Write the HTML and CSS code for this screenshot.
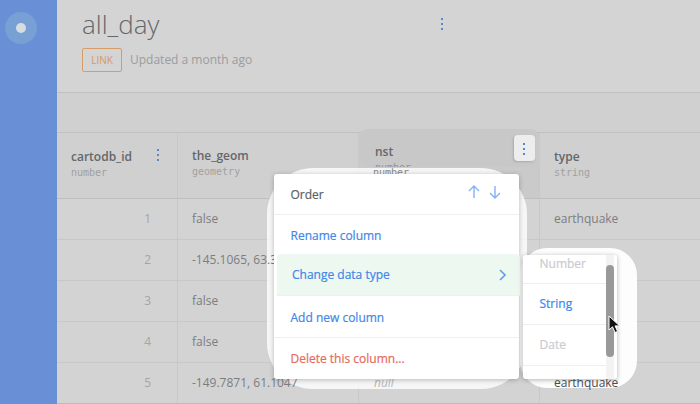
FILE: index.html
```html
<!DOCTYPE html>
<html lang="en">
<head>
<meta charset="utf-8">
<title>all_day</title>
<link rel="stylesheet" href="styles.css">
</head>
<body>
<div class="app">
  <aside class="sidebar"><div class="logo"><span></span></div></aside>
  <main class="main">
    <header class="header">
      <div class="title-row"><h1>all_day</h1><i class="dots"></i></div>
      <div class="meta"><span class="tag">LINK</span><span class="updated">Updated a month ago</span></div>
    </header>
    <div class="strip"></div>
    <section class="table">
      <div class="row head">
        <div class="cell"><div><b>cartodb_id</b><small>number</small></div><i class="dots id-dots"></i></div>
        <div class="cell geom"><div><b>the_geom</b><small>geometry</small></div></div>
        <div class="cell active"><small class="under lifted">number</small></div>
        <div class="cell"><div><b>type</b><small>string</small></div></div>
      </div>
      <div class="row"><div class="cell num">1</div><div class="cell">false</div><div class="cell"></div><div class="cell">earthquake</div></div>
      <div class="row"><div class="cell num">2</div><div class="cell"><span class="lifted">-145.1065, 63.3</span></div><div class="cell"></div><div class="cell"></div></div>
      <div class="row"><div class="cell num">3</div><div class="cell">false</div><div class="cell"></div><div class="cell"></div></div>
      <div class="row"><div class="cell num">4</div><div class="cell">false</div><div class="cell"></div><div class="cell"></div></div>
      <div class="row"><div class="cell num">5</div><div class="cell"><span class="lifted">-149.7871, 61.1047</span></div><div class="cell"><em class="lifted">null</em></div><div class="cell"><span class="lifted strong">earthquake</span></div></div>
    </section>
  </main>
</div>

<div class="column-focus"><span class="focus-name">nst</span><small>number</small><span class="dots-button"><i class="dots"></i></span></div>

<div class="glow glow-menu"></div>
<div class="glow glow-sub"></div>

<nav class="menu">
  <div class="item order"><span>Order</span>
    <svg width="34" height="14" viewBox="0 0 34 14"><path d="M7 13V1M2 6l5-5 5 5M28 1v12M23 8l5 5 5-5"/></svg>
  </div>
  <div class="item rename">Rename column</div>
  <div class="item change"><span>Change data type</span>
    <svg width="7" height="12" viewBox="0 0 7 12"><path d="M1 1l5 5-5 5"/></svg>
  </div>
  <div class="item add">Add new column</div>
  <div class="item delete">Delete this column...</div>
</nav>

<div class="submenu">
  <div class="options">
    <div class="option first">Number</div>
    <div class="option enabled">String</div>
    <div class="option">Date</div>
  </div>
  <div class="track"><div class="thumb"></div></div>
</div>

<svg class="pointer" width="14" height="20" viewBox="0 0 14 20"><path d="M1 1v14l3.500-3.200 2.500 5.700 2.600-1.100-2.500-5.500h4.600z"/></svg>
</body>
</html>
```
FILE: styles.css
```css
* { box-sizing: border-box; }
body {
  margin: 0;
  width: 700px;
  height: 404px;
  overflow: hidden;
  position: relative;
  font-family: "Open Sans", sans-serif;
  font-size: 12px;
  color: #7b7d80;
  background: #d3d3d3;
}
.app { display: flex; height: 404px; }
.sidebar { width: 57px; background: #6990d6; padding: 12px 5px; }
.logo {
  width: 32px; height: 32px; border-radius: 50%;
  background: #78a0d5;
  display: flex; align-items: center; justify-content: center;
}
.logo span { width: 10px; height: 10px; border-radius: 50%; background: #d9dcdf; }
.main { flex: 1; min-width: 0; }
.header { height: 93px; padding: 6px 25px 0; background: #d4d4d4; border-bottom: 1px solid #c0c0c0; }
.title-row { display: flex; align-items: center; height: 36px; }
h1 { margin: 0; width: 359px; font-size: 26px; line-height: 36px; font-weight: 300; color: #64686b; }
.dots {
  display: block; width: 2px; height: 12px;
  background: linear-gradient(#5e86c8 2px, transparent 2px 5px, #5e86c8 5px 7px, transparent 7px 10px, #5e86c8 10px);
}
.meta { display: flex; align-items: center; gap: 8px; margin-top: 6px; }
.tag {
  width: 40px; height: 24px; border: 1px solid #d69c68; border-radius: 2px;
  font-size: 10px; line-height: 23px; text-align: center; color: #d59a66;
}
.updated { color: #9a9c9e; line-height: 22px; }
.strip { height: 40px; background: #d0d0d0; border-bottom: 1px solid #c1c1c1; }
.row {
  display: grid; grid-template-columns: 121px 181px 181px 160px;
  height: 41px; border-bottom: 1px solid #c8c8c8;
}
.row:last-child { border-bottom-color: #bcbcbc; }
.cell {
  display: flex; align-items: center; min-width: 0; white-space: nowrap;
  padding: 0 0 2px 14px; border-right: 1px solid #c8c8c8;
}
.cell:last-child { border-right: 0; }
.num { padding: 0 26px 2px 0; justify-content: flex-end; color: #a5a5a5; }
.head { height: 66px; background: #d0d0d0; border-bottom-color: #bfbfbf; }
.head .cell { align-items: flex-start; padding-top: 15px; }
.head .geom { padding-top: 14px; }
.head b { display: block; font-size: 12px; line-height: 17px; font-weight: 600; color: #64676a; }
small { display: block; font-family: "DejaVu Sans Mono", monospace; font-size: 10px; line-height: 16px; color: #a0a0a0; }
.head .cell div { width: 86px; }
.id-dots { margin-top: 1px; }
.head .active { background: #cacaca; padding-top: 32px; }
.head .active .under { color: #888; }
.lifted { position: relative; z-index: 2; }
.strong { color: #4b4f53; }
em { padding-left: 1px; color: #b8b8b8; }
.column-focus {
  position: absolute; left: 360px; top: 129px; width: 178px; height: 38px;
  padding: 14px 0 0 15px; overflow: hidden;
  background: #c8c8c8; border-radius: 7px;
}
.focus-name { display: block; font-weight: 600; line-height: 17px; color: #64676a; }
.column-focus small { color: #929292; }
.dots-button {
  position: absolute; left: 154px; top: 6px; width: 21px; height: 26px;
  padding: 8px 0 0 9px;
  background: #ededed; border-radius: 4px; box-shadow: -1px 1px 2px #aaa;
}
.glow { position: absolute; z-index: 1; background: rgba(255, 255, 255, .8); }
.glow-menu { left: 267px; top: 168px; width: 260px; height: 221px; border-radius: 46px; }
.glow-sub { left: 520px; top: 248px; width: 117px; height: 140px; border-radius: 27px; background: rgba(255, 255, 255, .94); }
.menu {
  position: absolute; z-index: 3; left: 274px; top: 174px; width: 245px; height: 205px;
  background: #fff; border-radius: 3px; box-shadow: 0 1px 5px rgba(0, 0, 0, .25);
  color: #3f87e8;
  -webkit-text-stroke: .2px currentColor;
}
.item {
  display: flex; align-items: center; justify-content: space-between;
  height: 41px; padding: 0 18px 0 16.5px; border-bottom: 1px solid #efefef;
}
.item svg { fill: none; stroke: #83b2f4; stroke-width: 1.4; }
.order { color: #5d6267; }
.order svg { margin-top: -4px; }
.rename { height: 39px; padding-top: 2px; border: 0; }
.change { height: 42px; margin: 0 -1px 0 3px; padding: 0 14px 0 15px; background: #edf8f1; border-radius: 4px 4px 0 0; }
.add { height: 42px; padding-top: 2px; }
.change svg { stroke: #659eea; stroke-width: 1.6; }
.delete { padding-bottom: 1px; border: 0; color: #e56b5e; }
.submenu {
  position: absolute; z-index: 4; left: 523px; top: 255px; width: 94px; height: 124px;
  display: flex; overflow: hidden; background: #fff; border-radius: 3px;
  box-shadow: 0 1px 5px rgba(0, 0, 0, .3);
  -webkit-text-stroke: .2px currentColor;
}
.options { width: 83px; }
.option { height: 41px; line-height: 40px; padding-left: 16.5px; border-bottom: 1px solid #efefef; color: #cbcbcf; }
.option.first { height: 29px; line-height: 17px; }
.option.enabled { color: #3589f3; }
.track { width: 8px; padding-top: 10px; background: #f3f3f3; }
.thumb { height: 92px; border-radius: 4px; background: #999; }
.pointer { position: absolute; z-index: 5; left: 608px; top: 315px; fill: #111; stroke: #fff; stroke-width: 1; }
```
